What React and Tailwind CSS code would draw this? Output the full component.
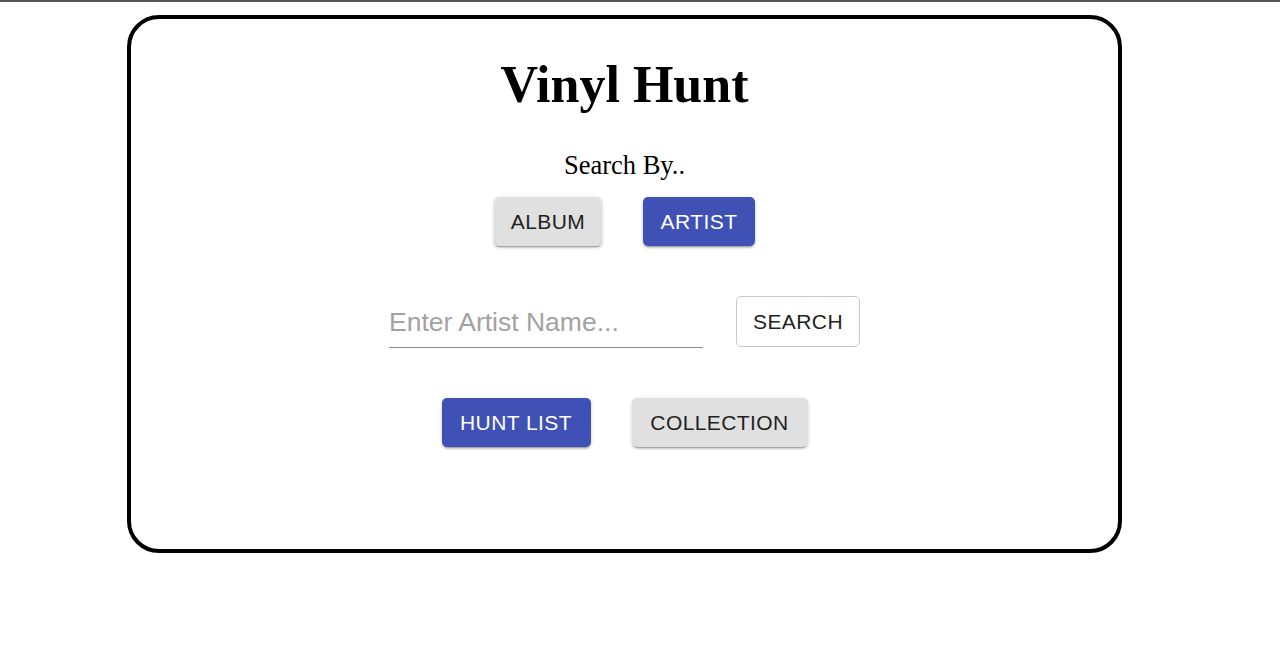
import { useState } from "react";

const btn =
  "h-[49px] px-4 rounded-[5px] text-[21px] tracking-[0.02em] uppercase font-['Liberation_Sans',Arial,sans-serif] shadow-[0_3px_1px_-2px_rgba(0,0,0,0.2),0_2px_2px_0_rgba(0,0,0,0.14),0_1px_5px_0_rgba(0,0,0,0.12)]";
const grey = "bg-[#e0e0e0] text-[#1f1f1f]";
const blue = "bg-[#3f51b5] text-white";

export default function App() {
  const [mode, setMode] = useState("artist");
  const [view, setView] = useState("hunt");

  return (
    <div className="min-h-screen bg-white border-t-2 border-[#555] pt-[13px]">
      {/* Card */}
      <div className="ml-[127px] w-[995px] h-[538px] border-4 border-black rounded-[32px] flex flex-col items-center">
        <h1 className="mt-[35px] text-[52px] leading-[62px] font-bold font-['Liberation_Serif','Times_New_Roman',serif] text-black">
          Vinyl Hunt
        </h1>
        <div className="mt-[34px] text-[26.5px] leading-[30px] font-['Liberation_Serif','Times_New_Roman',serif] text-black">
          Search By..
        </div>
        <div className="mt-[17px] flex gap-[41px]">
          <button onClick={() => setMode("album")} className={`${btn} w-[108px] ${mode === "album" ? blue : grey}`}>
            Album
          </button>
          <button onClick={() => setMode("artist")} className={`${btn} w-[112px] ${mode === "artist" ? blue : grey}`}>
            Artist
          </button>
        </div>

        <div className="mt-[50px] flex items-start gap-[33px]">
          <input
            placeholder={mode === "artist" ? "Enter Artist Name..." : "Enter Album Name..."}
            className="w-[314px] h-[52px] border-b border-[#8a8a8a] outline-none text-[26.5px] text-black placeholder:text-[#a2a2a2] font-['Liberation_Sans',Arial,sans-serif] pt-[2px]"
          />
          <button className="h-[51px] px-4 w-[124px] rounded-[5px] border border-[#c8c8c8] text-[21px] tracking-[0.02em] text-[#1f1f1f] font-['Liberation_Sans',Arial,sans-serif]">
            SEARCH
          </button>
        </div>

        <div className="mt-[50px] flex gap-[41px]">
          <button onClick={() => setView("hunt")} className={`${btn} w-[149px] ${view === "hunt" ? blue : grey}`}>
            Hunt List
          </button>
          <button onClick={() => setView("collection")} className={`${btn} w-[176px] ${view === "collection" ? blue : grey}`}>
            Collection
          </button>
        </div>
      </div>
    </div>
  );
}
